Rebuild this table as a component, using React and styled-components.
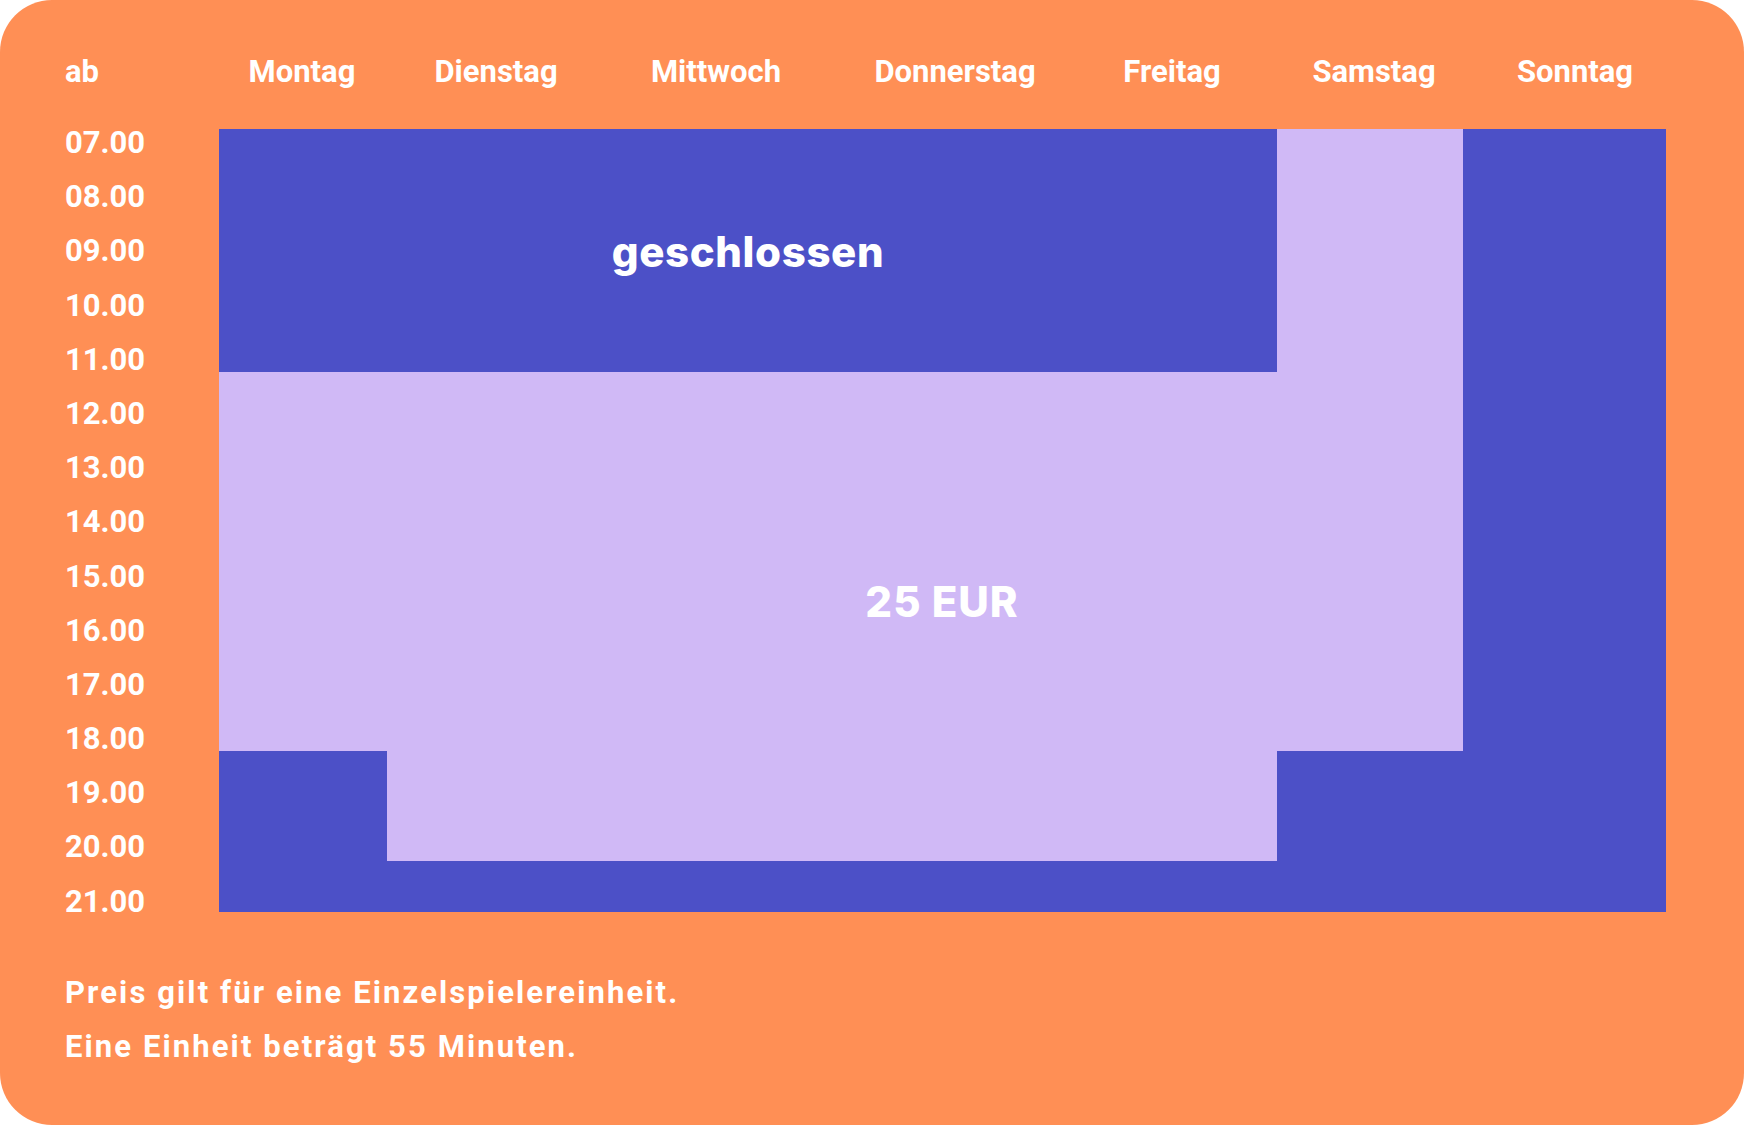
import React from 'react'
import styled, { createGlobalStyle } from 'styled-components'

const GlobalStyle = createGlobalStyle`
  html, body {
    margin: 0;
    padding: 0;
    background: #ffffff;
  }
  * { box-sizing: border-box; }
`

const ORANGE = '#ff8f55'
const BLUE = '#4c50c7'
const LAVENDER = '#d0b9f6'

const days = ['Montag', 'Dienstag', 'Mittwoch', 'Donnerstag', 'Freitag', 'Samstag', 'Sonntag']
// header labels sit a little off the chart columns in the original
const headWidths = '166px 222px 218px 260px 174px 230px 172px'
const colWidths = '168px 218px 222px 256px 194px 186px 203px'
const hours = ['07', '08', '09', '10', '11', '12', '13', '14', '15', '16', '17', '18', '19', '20', '21']

const Card = styled.div`
  width: 1744px;
  height: 1125px;
  background: ${ORANGE};
  border-radius: 52px;
  padding: 54px 0 0 65px;
  display: flex;
  flex-direction: column;
  color: #ffffff;
  font-family: Roboto, "Liberation Sans", sans-serif;
  font-weight: 700;
`

const Header = styled.div`
  display: grid;
  grid-template-columns: 154px ${headWidths};
  height: 36px;
  margin-bottom: 26px;
  font-size: 31px;
  line-height: 36px;
`

const HeadCell = styled.div`
  text-align: ${p => (p.$first ? 'left' : 'center')};
  white-space: nowrap;
`

const Body = styled.div`
  display: flex;
  align-items: flex-start;
`

const Hours = styled.div`
  width: 154px;
  display: grid;
  grid-auto-rows: 54.2px;
  font-size: 31px;
`

const Hour = styled.div`
  line-height: 54.2px;
  white-space: nowrap;
`

const Chart = styled.div`
  margin-top: 13px;
  display: grid;
  grid-template-columns: ${colWidths};
  grid-template-rows: 243px 379px 110px 51px;
  background: ${BLUE};
`

const Slot = styled.div`
  grid-column: ${p => p.$col};
  grid-row: ${p => p.$row};
  background: ${LAVENDER};
`

const ChartLabel = styled.div`
  grid-column: ${p => p.$col};
  grid-row: ${p => p.$row};
  display: flex;
  align-items: center;
  justify-content: center;
  padding: ${p => p.$pad || '0'};
  font-family: Inter, "Noto Sans", sans-serif;
  font-weight: 800;
  font-size: 42px;
  letter-spacing: ${p => p.$spacing || '1px'};
  z-index: 1;
`

const Footer = styled.div`
  margin-top: 37px;
  font-size: 31px;
  line-height: 54px;
  letter-spacing: 2.1px;
`

export default function App() {
  return (
    <>
      <GlobalStyle />
      <Card>
        <Header>
          <HeadCell $first>ab</HeadCell>
          {days.map(d => (
            <HeadCell key={d}>{d}</HeadCell>
          ))}
        </Header>
        <Body>
          <Hours>
            {hours.map(h => (
              <Hour key={h}>{h}.00</Hour>
            ))}
          </Hours>
          <Chart>
            <Slot $col="6 / 7" $row="1 / 3" />
            <Slot $col="1 / 6" $row="2 / 3" />
            <Slot $col="2 / 6" $row="3 / 4" />
            <ChartLabel $col="1 / 6" $row="1 / 2" $pad="2px 0 0 0" $spacing="0.6px">
              geschlossen
            </ChartLabel>
            <ChartLabel $col="2 / 7" $row="2 / 4" $pad="0 0 30px 34px">
              25 EUR
            </ChartLabel>
          </Chart>
        </Body>
        <Footer>
          Preis gilt für eine Einzelspielereinheit.
          <br />
          Eine Einheit beträgt 55 Minuten.
        </Footer>
      </Card>
    </>
  )
}
